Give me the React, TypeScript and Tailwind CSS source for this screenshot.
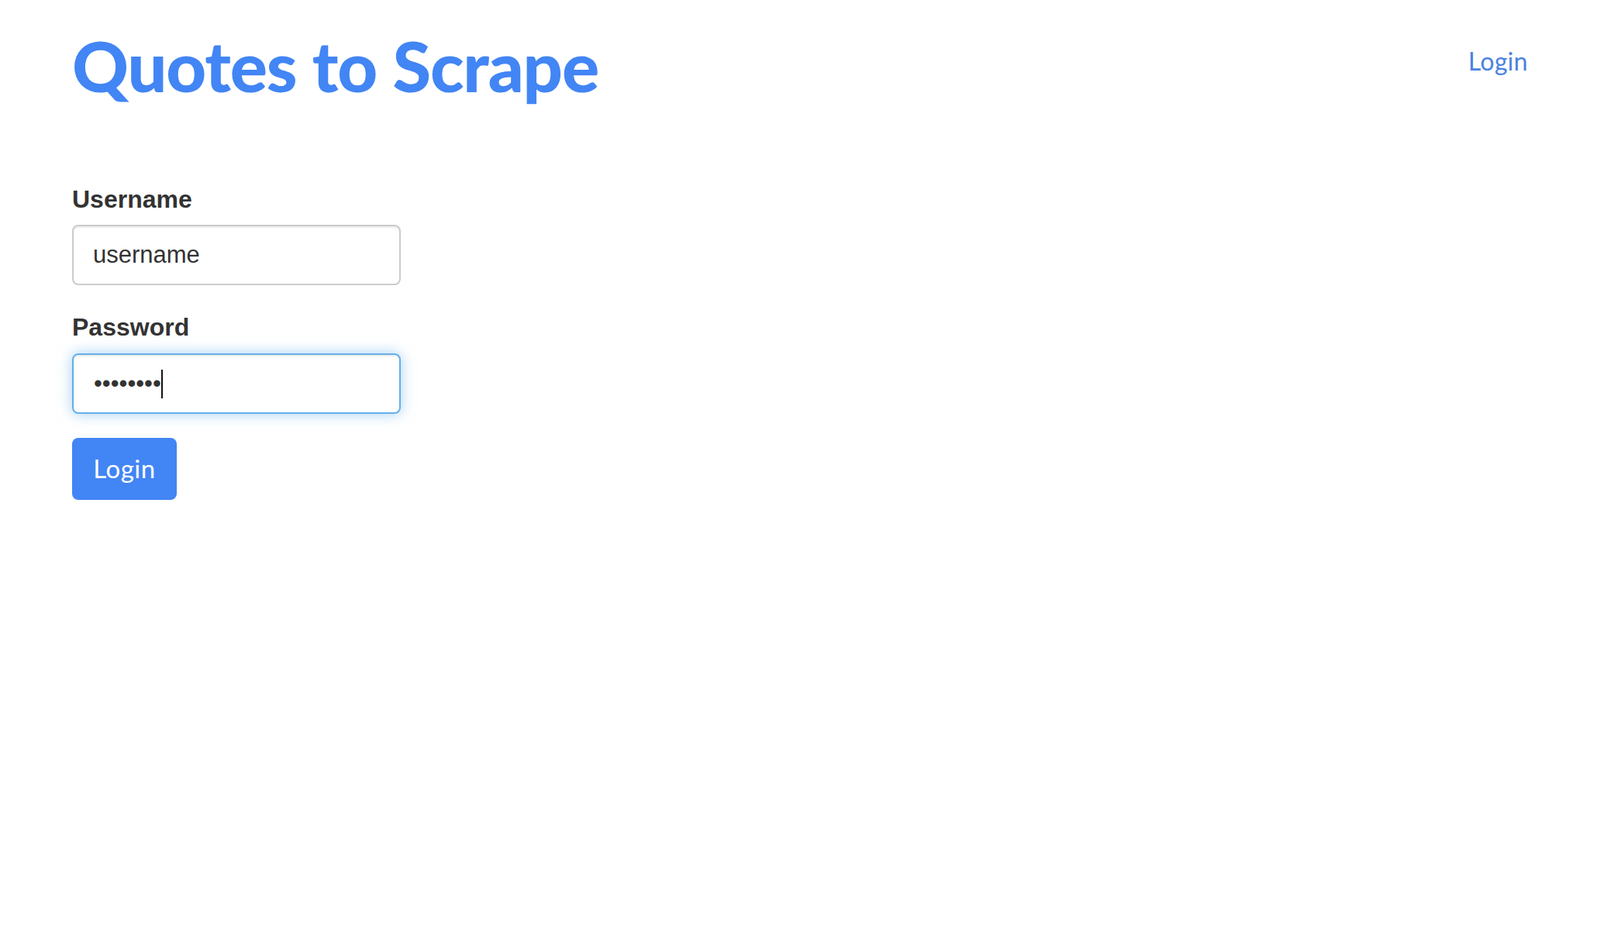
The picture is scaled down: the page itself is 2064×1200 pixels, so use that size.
import React from "react";

export default function App() {
  return (
    <div className="min-h-[1200px] bg-white px-[93px] font-['Liberation_Sans',Arial,sans-serif] text-[#333]">
      <header className="flex items-start justify-between pt-[30px]">
        <h1 className="m-0 font-['Lato',sans-serif] text-[90px] font-black leading-[108px] tracking-[-1.1px] text-[#4285f4]">
          Quotes to Scrape
        </h1>
        <a href="#" className="mt-[27px] font-['Lato',sans-serif] text-[32px] leading-[44px] tracking-[0.3px] text-[#4a82e0] no-underline">
          Login
        </a>
      </header>

      <form className="mt-[97px] w-[424px]" onSubmit={(e) => e.preventDefault()}>
        <div className="mb-[32px]">
          <label className="mb-[11px] block text-[32px] font-bold leading-[44px] text-[#333]">
            Username
          </label>
          <input
            type="text"
            defaultValue="username"
            className="block h-[78px] w-[424px] rounded-[8px] border-2 border-[#cccccc] bg-white px-[25px] text-[31px] text-[#333] shadow-[inset_0_2px_2px_rgba(0,0,0,0.075)] outline-none"
          />
        </div>
        <div className="mb-[31px]">
          <label className="mb-[12px] block text-[32px] font-bold leading-[44px] text-[#333]">
            Password
          </label>
          <div className="relative">
            <input
              type="password"
              defaultValue="password"
              className="block h-[78px] w-[424px] rounded-[8px] border-2 border-[#66afe9] bg-white px-[26px] text-[31px] text-[#333] shadow-[inset_0_2px_2px_rgba(0,0,0,0.075),0_0_18px_rgba(102,175,233,0.6)] outline-none"
            />
            <span className="pointer-events-none absolute left-[115px] top-[21px] h-[37px] w-[2px] bg-[#111]" />
          </div>
        </div>
        <button
          type="submit"
          className="h-[80px] w-[135px] rounded-[8px] border-0 bg-[#4285f4] font-['Lato',sans-serif] text-[33px] tracking-[0.5px] text-white"
        >
          Login
        </button>
      </form>
    </div>
  );
}
